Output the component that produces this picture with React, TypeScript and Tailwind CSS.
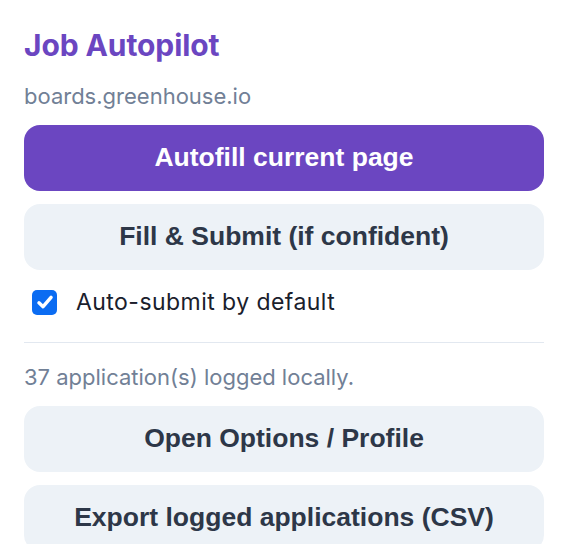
import React from "react";

export default function App() {
  return (
    <div className="w-[568px] h-[544px] overflow-hidden bg-white px-6 pt-[27px] font-['Inter',sans-serif]">
      <h1 className="text-[30px] leading-[36px] font-bold tracking-[-0.1px] text-[#6b46c1]">Job Autopilot</h1>
      <div className="mt-[20px] text-[22px] leading-[26px] text-[#718096]">boards.greenhouse.io</div>
      <button className="mt-4 flex h-[66px] w-full items-center justify-center rounded-[16px] bg-[#6b46c1] font-['Liberation_Sans',Arial,sans-serif] text-[26.5px] font-bold text-white">
        Autofill current page
      </button>
      <button className="mt-[13px] flex h-[66px] w-full items-center justify-center rounded-[16px] bg-[#edf2f7] font-['Liberation_Sans',Arial,sans-serif] text-[26.5px] font-bold text-[#2d3748]">
        Fill &amp; Submit (if confident)
      </button>
      <label className="mt-[19px] flex h-[26px] items-center">
        <span className="ml-2 flex h-[25px] w-[25px] items-center justify-center rounded-[5px] bg-[#0b6cf2]">
          <svg width="22" height="22" viewBox="0 0 16 16" fill="none">
            <path d="M3.6 8.6 L6.6 11.4 L12.4 4.6" stroke="white" strokeWidth="2.5" strokeLinecap="round" strokeLinejoin="round" />
          </svg>
        </span>
        <span className="ml-[19px] text-[23px] leading-[26px] tracking-[0.45px] text-[#1a202c]">Auto-submit by default</span>
      </label>
      <div className="mt-[27px] h-px w-full bg-[#e2e8f0]" />
      <div className="mt-[21px] text-[22px] leading-[26px] text-[#718096]">37 application(s) logged locally.</div>
      <button className="mt-4 flex h-[66px] w-full items-center justify-center rounded-[16px] bg-[#edf2f7] font-['Liberation_Sans',Arial,sans-serif] text-[26.5px] font-bold text-[#2d3748]">
        Open Options / Profile
      </button>
      <button className="mt-[13px] flex h-[66px] w-full items-center justify-center rounded-[16px] bg-[#edf2f7] font-['Liberation_Sans',Arial,sans-serif] text-[26.5px] font-bold text-[#2d3748]">
        Export logged applications (CSV)
      </button>
    </div>
  );
}
